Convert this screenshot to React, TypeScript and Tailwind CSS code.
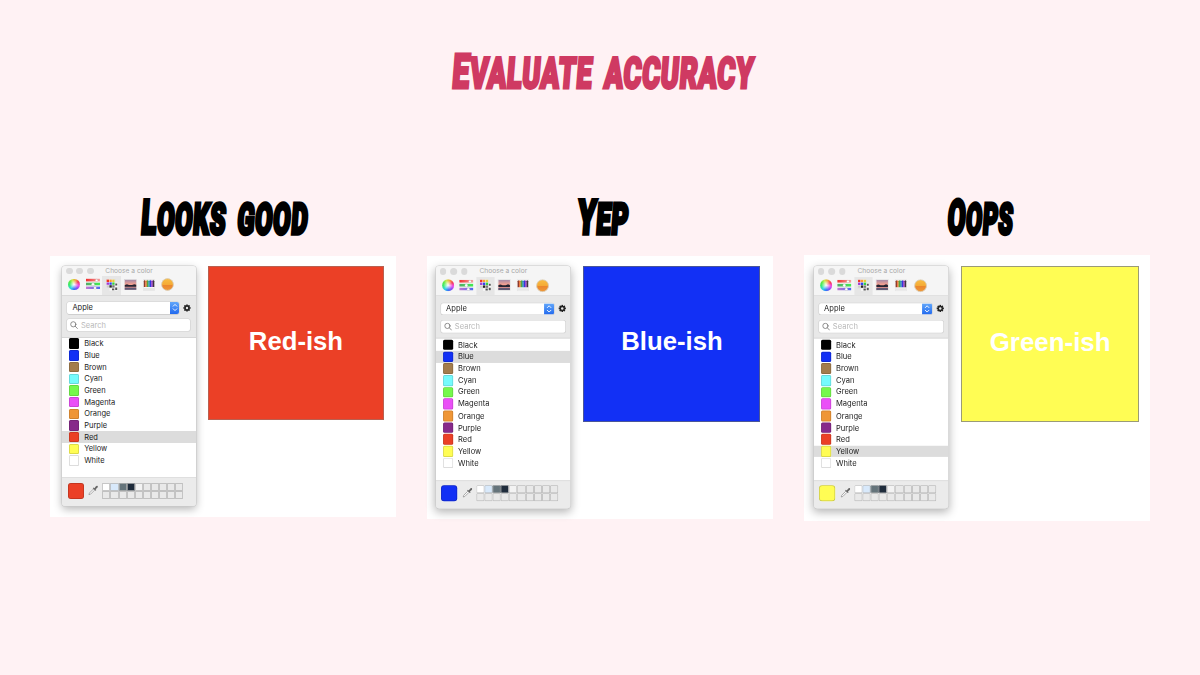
import { useLayoutEffect, useRef, useState } from "react";

const COLORS = [
  ["Black", "bg-black"],
  ["Blue", "bg-[#1230f5]"],
  ["Brown", "bg-[#a37c4c]"],
  ["Cyan", "bg-[#75fbfd]"],
  ["Green", "bg-[#75f94c]"],
  ["Magenta", "bg-[#ea4ff7]"],
  ["Orange", "bg-[#ef9636]"],
  ["Purple", "bg-[#87298a]"],
  ["Red", "bg-[#eb4026]"],
  ["Yellow", "bg-[#fffd54]"],
  ["White", "bg-white"],
];

const SAVED = ["bg-white", "bg-[#d8e9fb]", "bg-[#65747b]", "bg-[#1f2c3c]", "bg-[#f3f3f3]"];

/** Condensed, slanted display heading that is squeezed to a fixed width. */
function Display({ text, width, color }: { text: string; width: number; color: string }) {
  const ref = useRef<HTMLSpanElement>(null);
  const [scale, setScale] = useState(0.6);
  useLayoutEffect(() => {
    if (ref.current) setScale(width / ref.current.offsetWidth);
  }, [width]);
  return (
    <span
      ref={ref}
      className={`inline-block whitespace-nowrap font-['Roboto'] text-[43px] font-black uppercase leading-[50px] tracking-[1px] [word-spacing:7px] ${color}`}
      style={{ transform: `scaleX(${scale}) skewX(-7deg)` }}
    >
      <span className="text-[48px]">{text[0]}</span>
      {text.slice(1)}
    </span>
  );
}

function ToolbarIcons() {
  return (
    <>
      <div className="flex w-[18.7px] justify-center">
        <div className="mt-[2.6px] size-[11.8px] rounded-full bg-[radial-gradient(circle,#fff_0%,transparent_55%),conic-gradient(from_20deg,#f4a03c,#f43c5a,#f04be8,#8a50f5,#3477f7,#34d3ea,#39e977,#58e94b,#c9e94b,#f4a03c)]" />
      </div>
      <div className="flex w-[18.7px] justify-center">
        <svg className="mt-[2.4px] h-3 w-[14px]" viewBox="0 0 14 12">
          <defs>
            <linearGradient id="sr"><stop stopColor="#f02c2c" /><stop offset="1" stopColor="#f3a2a2" /></linearGradient>
            <linearGradient id="sg"><stop stopColor="#55a968" /><stop offset="1" stopColor="#41ed50" /></linearGradient>
            <linearGradient id="sb"><stop stopColor="#c477d1" /><stop offset="1" stopColor="#4c69ee" /></linearGradient>
          </defs>
          <rect y=".8" width="14" height="2.6" fill="url(#sr)" />
          <rect y="4.7" width="14" height="2.6" fill="url(#sg)" />
          <rect y="8.6" width="14" height="2.4" fill="url(#sb)" />
          <g fill="white" stroke="#aaa" strokeWidth=".25">
            <circle cx="10.6" cy="2.4" r="1.2" /><circle cx="7" cy="6.3" r="1.4" /><circle cx="9" cy="10" r="1.3" />
          </g>
        </svg>
      </div>
      <div className="flex h-full w-[18.7px] justify-center bg-[#e6e6e6]">
        <svg className="mt-[2.8px] size-3" viewBox="0 0 12 12">
          <rect x="3.6" y="3.6" width="8" height="8" fill="#f8f8f8" />
          <path d="M9.2 4.5h2v2h-2zM9.2 8.5h2v2.6h-2zM6 9.4h2.3v1.8H6z" fill="#555" />
          <rect x=".2" y=".2" width="8.8" height="8.6" fill="#fff" stroke="#ccc" strokeWidth=".3" />
          <rect x=".6" y=".6" width="2.4" height="2.4" fill="#ee3522" /><rect x="3.4" y=".6" width="2.4" height="2.4" fill="#ff9b2f" /><rect x="6.2" y=".6" width="2.4" height="2.4" fill="#e8cc3a" />
          <rect x=".6" y="3.4" width="2.4" height="2.4" fill="#a23cd0" /><rect x="3.4" y="3.4" width="2.4" height="2.4" fill="#3542ef" /><rect x="6.2" y="3.4" width="2.4" height="2.4" fill="#36cf43" />
          <rect x=".6" y="6.2" width="2.4" height="2.4" fill="#ccc" /><rect x="3.4" y="6.2" width="2.4" height="2.4" fill="#222" /><rect x="6.2" y="6.2" width="2.4" height="2.4" fill="#777" />
        </svg>
      </div>
      <div className="flex w-[18.7px] justify-center">
        <svg className="mt-[2.8px] h-[11.6px] w-[13px]" viewBox="0 0 13 11" preserveAspectRatio="none">
          <defs><linearGradient id="sky" x2="0" y2="1"><stop stopColor="#a48aa8" /><stop offset=".5" stopColor="#fba28f" /><stop offset="1" stopColor="#a87588" /></linearGradient></defs>
          <rect x=".3" y=".3" width="12.4" height="10.4" fill="#fff" stroke="#d0d0d0" strokeWidth=".5" />
          <rect x=".8" y=".8" width="11.4" height="9.3" fill="url(#sky)" />
          <path d="M.8 5.6 3 5l2 .8 3-.1 2.3-.8 1.9.6v1.8H.8z" fill="#242333" />
          <path d="M.8 8.4h11.4v1.7H.8z" fill="#625a76" />
        </svg>
      </div>
      <div className="flex w-[18.7px] justify-center">
        <svg className="mt-[2.8px] h-3 w-3" viewBox="0 0 12 12">
          <rect x=".3" y=".5" width="11.4" height="11" rx=".5" fill="#f6f6f6" stroke="#d4d4d4" strokeWidth=".4" />
          {["#8d3b2e", "#ed702f", "#54a53b", "#2698a4", "#3338dd", "#9233c6", "#40343f"].map((c, i) => (
            <path key={c} d={`M${0.8 + i * 1.5} 2.2l.75-1.4.75 1.4v5.8h-1.5z`} fill={c} />
          ))}
          <path d="M.3 9.1h11.4v2H.3z" fill="#e7e7e7" />
        </svg>
      </div>
      <div className="flex w-[18.7px] justify-center">
        <svg className="mt-[2px] size-[13px]" viewBox="0 0 13 13">
          <defs><linearGradient id="sun" x2="0" y2="1"><stop stopColor="#f8bd45" /><stop offset=".5" stopColor="#f5ab35" /><stop offset=".55" stopColor="#eb862d" /><stop offset="1" stopColor="#ef9a38" /></linearGradient></defs>
          <circle cx="6.5" cy="6.5" r="5.9" fill="url(#sun)" stroke="#d9cdb8" strokeWidth=".9" />
        </svg>
      </div>
    </>
  );
}

function Gear() {
  return (
    <svg className="size-[8px]" viewBox="-5 -5 10 10">
      <g fill="#222">
        {[0, 45, 90, 135].map((a) => (
          <rect key={a} x="-1" y="-4.5" width="2" height="9" rx=".3" transform={`rotate(${a})`} />
        ))}
        <circle r="3.3" />
      </g>
      <circle r="1.5" fill="#e8e8e8" />
    </svg>
  );
}

function Picker({ selected, scale }: { selected: string; scale: string }) {
  const current = COLORS.find(([n]) => n === selected)![1];
  return (
    <div className={`flex h-[240.4px] w-[133.4px] shrink-0 origin-top-left flex-col overflow-hidden rounded-[3px] bg-[#ebebeb] font-['Inter'] text-[7.5px] text-[#222] shadow-[0_0_0_0.6px_#cacaca,0_3px_9px_rgba(0,0,0,0.3)] ${scale}`}>
      <div className="flex h-[30px] shrink-0 flex-col border-b border-[#dadada] bg-[#f5f5f5]">
        <div className="flex h-[10.6px] shrink-0 items-center pl-[3.6px]">
          <div className="flex gap-[3.9px]">
            <div className="size-[6.6px] rounded-full bg-[#dadada]" />
            <div className="size-[6.6px] rounded-full bg-[#dadada]" />
            <div className="size-[6.6px] rounded-full bg-[#dadada]" />
          </div>
          <span className="ml-[11.8px] whitespace-nowrap text-[6.6px] leading-[10px] tracking-[0.02px] text-[#a9a9a9]">Choose a color</span>
        </div>
        <div className="flex min-h-0 flex-1 pl-[2.4px]">
          <ToolbarIcons />
        </div>
      </div>
      <div className="flex h-[42.4px] shrink-0 flex-col border-b border-[#d6d6d6] bg-[#e8e8e8] pl-[5px] pt-[6.5px]">
        <div className="flex items-center">
          <div className="flex h-[11.8px] w-[112px] items-center justify-between overflow-hidden rounded-[2px] bg-white pl-[5px] shadow-[0_0_0_0.5px_#cfcfcf,0_0.5px_0.6px_#b4b4b4]">
            <span>Apple</span>
            <div className="flex h-full w-[9.6px] items-center justify-center bg-gradient-to-b from-[#62a6fa] to-[#2269ee]">
              <svg className="h-[9px] w-[6px]" viewBox="0 0 6 9" fill="none" stroke="white" strokeWidth=".9" strokeLinecap="round" strokeLinejoin="round">
                <path d="m1.2 3.2 1.8-1.8 1.8 1.8M1.2 5.8 3 7.6l1.8-1.8" />
              </svg>
            </div>
          </div>
          <div className="ml-[3.5px] flex"><Gear /></div>
        </div>
        <div className="mt-[5.6px] flex h-[11.8px] w-[122.6px] items-center rounded-[2px] bg-white pl-[3px] shadow-[0_0_0_0.6px_#cfcfcf]">
          <svg className="size-[8px]" viewBox="0 0 8 8" fill="none" stroke="#6c6c6c" strokeWidth=".75" strokeLinecap="round">
            <circle cx="3.3" cy="3.3" r="2.6" /><path d="m5.2 5.2 2.2 2.3" />
          </svg>
          <span className="ml-[2.6px] text-[#b8b8b8]">Search</span>
        </div>
      </div>
      <div className="flex h-[139.4px] shrink-0 flex-col bg-white">
        {COLORS.map(([name, bg]) => (
          <div key={name} className={`flex h-[11.7px] shrink-0 items-center pl-[6.5px] ${name === selected ? "bg-[#dcdcdc]" : ""}`}>
            <div className={`size-[10.5px] rounded-[1.5px] shadow-[inset_0_0_0_0.7px_rgba(0,0,0,0.18)] ${bg}`} />
            <span className="ml-[4.8px] leading-[11px]">{name}</span>
          </div>
        ))}
      </div>
      <div className="flex min-h-0 flex-1 items-start border-t border-[#dfdfdf] bg-[#ebebeb] pl-[5.4px] pt-[4.4px]">
        <div className={`size-[16px] rounded-[3px] shadow-[inset_0_0_0_0.7px_rgba(0,0,0,0.22)] ${current}`} />
        <svg className="ml-[4.3px] mt-[2.2px] size-[10.5px]" viewBox="0 0 11 11">
          <path d="M1 10.2 1.5 8.4 5.8 4.1 7 5.3 2.7 9.6z" fill="#fafafa" stroke="#888" strokeWidth=".7" />
          <path d="m5 3.5.9-.8.8.7L8.3 1.4c.6-.7 1.3-.7 1.7-.3.5.5.4 1.1-.2 1.7L8 4.5l.7.8-.8.8z" fill="#666" />
        </svg>
        <div className="ml-[3.8px] grid grid-cols-10">
          {Array.from({ length: 20 }, (_, i) => (
            <div key={i} className={`h-[8px] w-[8.1px] rounded-[1px] shadow-[inset_0_0_0_0.7px_#b4b4b4] ${SAVED[i] ?? "bg-[#e9e9e9]"}`} />
          ))}
        </div>
      </div>
    </div>
  );
}

export default function App() {
  return (
    <main className="flex h-[675px] w-[1200px] flex-col overflow-hidden bg-[#fff2f4]">
      <h1 className="ml-[2px] mt-[47px] flex h-[49px] justify-center pl-[5px]">
        <Display text="Evaluate accuracy" width={302} color="text-[#cf3a62] [-webkit-text-stroke:3px_#cf3a62]" />
      </h1>
      <div className="mt-[97px] flex items-start gap-[31px] pl-[50px]">
        <section className="flex w-[346px] flex-col">
          <h2 className="flex h-[49px] justify-center pl-[5px]">
            <Display text="Looks good" width={167} color="text-black [-webkit-text-stroke:3.6px_black]" />
          </h2>
          <div className="mt-[14px] flex h-[261px] bg-white pl-[12.4px] pt-[9.5px]">
            <Picker selected="Red" scale="scale-100" />
            <div className="ml-[12.2px] flex h-[154.5px] w-[176px] items-center justify-center border border-[#b96050] bg-[#eb4026] font-['Liberation_Sans'] text-[25.7px] font-bold leading-none text-white">
              <span className="-mt-[2px]">Red-ish</span>
            </div>
          </div>
        </section>
        <section className="flex w-[346px] flex-col">
          <h2 className="flex h-[49px] justify-center pl-[7px]">
            <Display text="Yep" width={51} color="text-black [-webkit-text-stroke:3.6px_black]" />
          </h2>
          <div className="mt-[14px] flex h-[263px] bg-white pl-[8.5px] pt-[9.5px]">
            <Picker selected="Blue" scale="scale-[1.01]" />
            <div className="ml-[14.6px] flex h-[156px] w-[177px] items-center justify-center border border-[#4a5699] bg-[#1230f5] font-['Liberation_Sans'] text-[25.7px] font-bold leading-none text-white">
              <span className="-mt-[3px]">Blue-ish</span>
            </div>
          </div>
        </section>
        <section className="flex w-[346px] flex-col">
          <h2 className="flex h-[49px] justify-center pl-[7px]">
            <Display text="Oops" width={66} color="text-black [-webkit-text-stroke:3.6px_black]" />
          </h2>
          <div className="mt-[13px] flex h-[266px] bg-white pl-[9.8px] pt-[11px]">
            <Picker selected="Yellow" scale="scale-[1.01]" />
            <div className="ml-[14.2px] flex h-[156px] w-[177.5px] items-center justify-center border border-[#9b9b76] bg-[#fffd54] font-['Liberation_Sans'] text-[25.9px] font-bold leading-none text-white">
              <span className="-mt-[2px]">Green-ish</span>
            </div>
          </div>
        </section>
      </div>
    </main>
  );
}
